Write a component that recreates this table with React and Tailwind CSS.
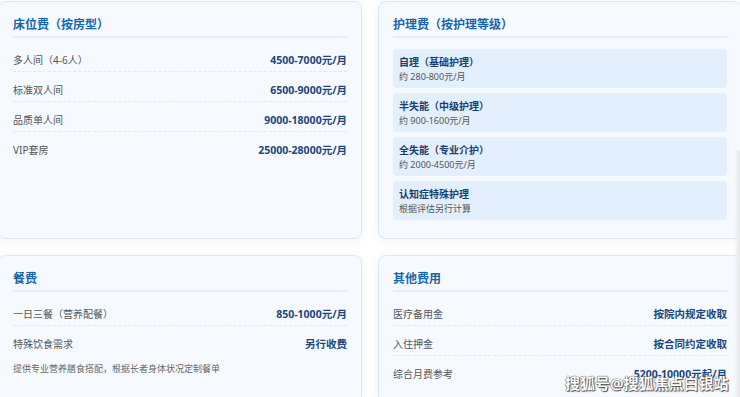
const font = { fontFamily: '"Noto Sans", "Noto Sans CJK SC", sans-serif' };

const bedRows = [
  { label: '多人间（4-6人）', value: '4500-7000元/月' },
  { label: '标准双人间', value: '6500-9000元/月' },
  { label: '品质单人间', value: '9000-18000元/月' },
  { label: 'VIP套房', value: '25000-28000元/月' },
];

const careLevels = [
  { title: '自理（基础护理）', sub: '约 280-800元/月' },
  { title: '半失能（中级护理）', sub: '约 900-1600元/月' },
  { title: '全失能（专业介护）', sub: '约 2000-4500元/月' },
  { title: '认知症特殊护理', sub: '根据评估另行计算' },
];

const mealRows = [
  { label: '一日三餐（营养配餐）', value: '850-1000元/月' },
  { label: '特殊饮食需求', value: '另行收费' },
];

const otherRows = [
  { label: '医疗备用金', value: '按院内规定收取' },
  { label: '入住押金', value: '按合同约定收取' },
  { label: '综合月费参考', value: '5200-10000元起/月' },
];

const Card = ({ title, children }) => (
  <div className="rounded-lg border border-[#d9e8fa] bg-[#f6faff] px-[14px] pt-[13px] pb-[18px] shadow-[0_2px_8px_rgba(40,100,170,0.08)]">
    <h2 className="border-b-2 border-[#e2eefb] pb-[1px] text-[12px] leading-[20px] font-bold text-[#1766a9]">
      {title}
    </h2>
    {children}
  </div>
);

const FeeRows = ({ rows }) => (
  <div className="mt-[4px]">
    {rows.map((row, i) => (
      <div
        key={row.label}
        className={`flex items-center justify-between pt-[11px] pb-[3px] ${
          i < rows.length - 1 ? 'border-b border-dashed border-[#dce9f8]' : ''
        }`}
      >
        <span className="text-[10px] leading-[15px] text-[#555]">{row.label}</span>
        <span className="text-[10.5px] leading-[15px] font-bold text-[#1b477c]">{row.value}</span>
      </div>
    ))}
  </div>
);

const App = () => {
  return (
    <div className="relative h-[397px] w-[740px] overflow-hidden bg-white" style={font}>
      <div className="ml-[-2px] grid w-[744px] grid-cols-2 gap-4 pt-[1px]">
        <Card title="床位费（按房型）">
          <FeeRows rows={bedRows} />
        </Card>

        <Card title="护理费（按护理等级）">
          <div className="mt-[11px] flex flex-col gap-[5px]">
            {careLevels.map(level => (
              <div key={level.title} className="h-[39px] rounded bg-[#e3effd] px-[6px] pt-[6px]">
                <div className="text-[10px] leading-[14px] font-bold text-[#1b3f6d]">{level.title}</div>
                <div className="mt-[2px] text-[9px] leading-[12px] text-[#555]">{level.sub}</div>
              </div>
            ))}
          </div>
        </Card>

        <Card title="餐费">
          <FeeRows rows={mealRows} />
          <p className="mt-[7px] text-[9px] leading-[13px] text-[#666]">
            提供专业营养膳食搭配，根据长者身体状况定制餐单
          </p>
        </Card>

        <Card title="其他费用">
          <FeeRows rows={otherRows} />
        </Card>
      </div>

      {/* right edge fade */}
      <div className="absolute top-[150px] right-0 bottom-0 w-[6px] bg-gradient-to-r from-transparent to-[#e6e6e6]" />

      {/* watermark */}
      <div className="absolute top-[372px] left-[565px] text-[15px] leading-[22px] font-bold text-white [text-shadow:0_0_1px_#444,0_0_1px_#444,1px_1px_1px_#555]">
        搜狐号@搜狐焦点白银站
      </div>
    </div>
  );
};

export default App;
